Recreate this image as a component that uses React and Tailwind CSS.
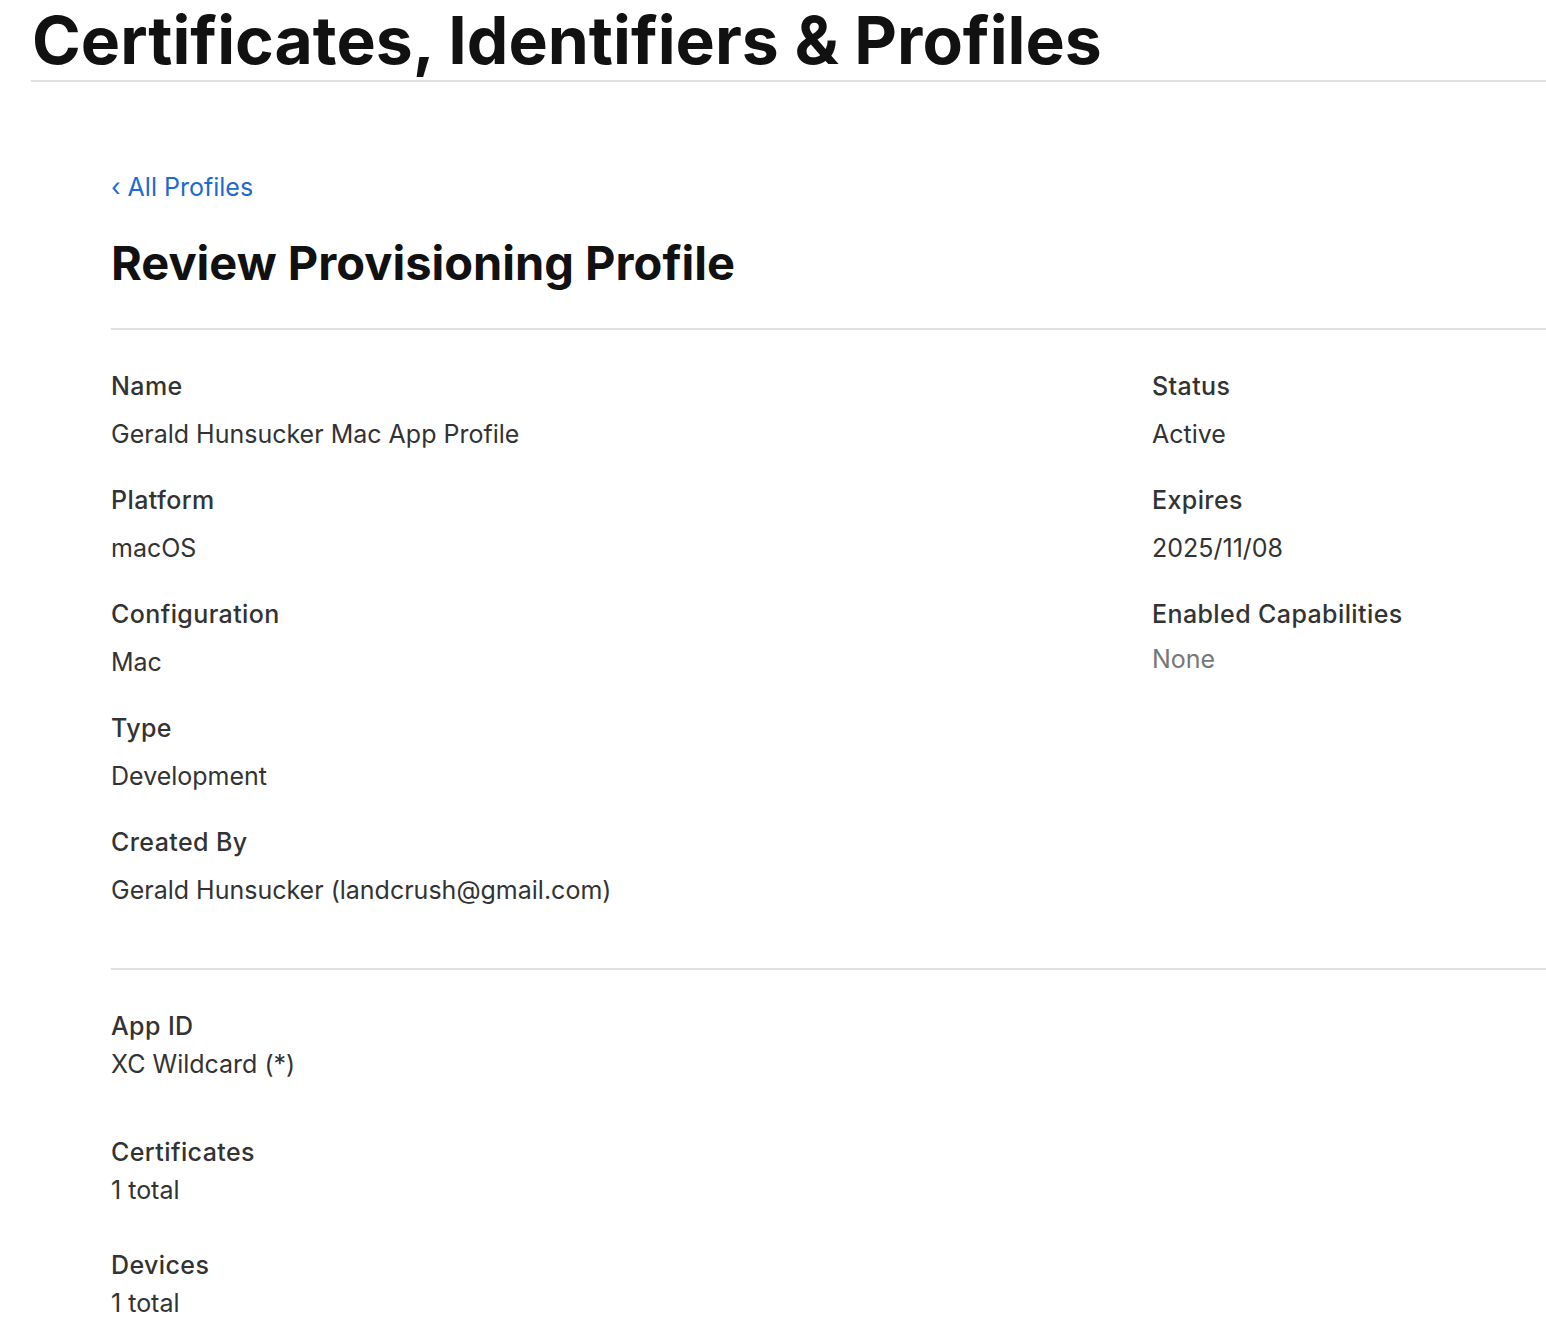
import React from "react";

const Field = ({ label, value, muted, tight, className = "" }) => (
    <div className={`flex flex-col ${className}`}>
        <div className="text-[25px] leading-[30px] font-medium tracking-[0.4px] text-[#333]">{label}</div>
        <div className={`text-[25px] leading-[30px] ${tight ? "mt-[8px]" : muted ? "mt-[15px]" : "mt-[18px]"} ${muted ? "text-[#777]" : "text-[#333]"}`}>{value}</div>
    </div>
);

const App = () => {
    const left = [
        { label: "Name", value: "Gerald Hunsucker Mac App Profile" },
        { label: "Platform", value: "macOS" },
        { label: "Configuration", value: "Mac" },
        { label: "Type", value: "Development" },
        { label: "Created By", value: "Gerald Hunsucker (landcrush@gmail.com)" },
    ];
    const right = [
        { label: "Status", value: "Active" },
        { label: "Expires", value: "2025/11/08" },
        { label: "Enabled Capabilities", value: "None", muted: true },
    ];

    return (
        <div className="min-h-screen bg-white pb-10" style={{ fontFamily: "Inter, 'Noto Sans', sans-serif" }}>
            {/* page header */}
            <div className="pl-[31px]">
                <h1 className="text-[66px] leading-[80px] font-bold text-[#111] pl-[1px]">Certificates, Identifiers &amp; Profiles</h1>
                <div className="h-[2px] bg-[#e0e0e0]"></div>
            </div>

            <div className="pl-[111px]">
                <div className="mt-[90px] text-[25px] leading-[30px] text-[#1d6ad0] flex items-center gap-[7px]">
                    <span>‹</span>
                    <span>All Profiles</span>
                </div>
                <h2 className="mt-[31px] text-[47px] leading-[60px] font-bold text-[#111]">Review Provisioning Profile</h2>
                <div className="mt-[35px] h-[2px] bg-[#e0e0e0]"></div>

                {/* profile details */}
                <div className="flex pt-[41px]">
                    <div className="w-[1041px] flex flex-col gap-[36px]">
                        {left.map((f) => (
                            <Field key={f.label} {...f} />
                        ))}
                    </div>
                    <div className="flex flex-col gap-[36px]">
                        {right.map((f) => (
                            <Field key={f.label} {...f} />
                        ))}
                    </div>
                </div>

                <div className="mt-[63px] h-[2px] bg-[#e0e0e0]"></div>

                <div className="pt-[41px] flex flex-col">
                    <Field label="App ID" value="XC Wildcard (*)" tight />
                    <Field label="Certificates" value="1 total" tight className="mt-[58px]" />
                    <Field label="Devices" value="1 total" tight className="mt-[45px]" />
                </div>
            </div>
        </div>
    );
};

export default App;
